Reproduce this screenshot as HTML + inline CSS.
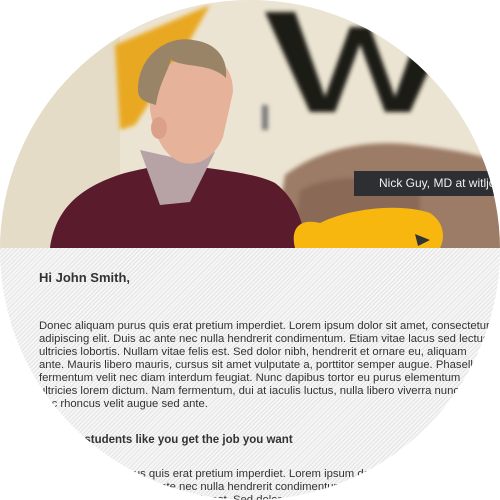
<!DOCTYPE html>
<html><head><style>
html,body{margin:0;padding:0;background:#fff;width:500px;height:500px;overflow:hidden}
.c{position:absolute;left:0;top:0;width:500px;height:500px;border-radius:50%;overflow:hidden;
background:repeating-linear-gradient(135deg,#f6f6f6 0 2px,#e4e4e4 2px 3px)}
.ph{position:absolute;left:0;top:0;width:500px;height:248px}
.cap{position:absolute;left:354px;top:171px;width:160px;height:25px;background:#2d2f33;color:#f0f0f0;font:12px "Liberation Sans",sans-serif;line-height:25px;padding-left:25px;box-sizing:border-box;white-space:nowrap}
.t{position:absolute;left:39px;font-family:"Liberation Sans",sans-serif;color:#333;white-space:nowrap}
.h{font-size:13px;font-weight:bold}
.p{font-size:11.3px;line-height:13px}
</style></head><body>
<div class="c">
<svg class="ph" viewBox="0 0 500 248" width="500" height="248">
<defs><filter id="b"><feGaussianBlur stdDeviation="2"/></filter></defs>
<rect width="500" height="248" fill="#ece4d2"/>
<rect x="0" y="0" width="120" height="248" fill="#e4dcc6"/>
<g filter="url(#b)">
<polygon points="115,45 210,5 190,40 135,125 120,130" fill="#e9a823"/>
<path d="M265 12h30l30 85 25-70h20l25 70 30-85h30l-45 100h-25l-25-68-25 68h-25z" fill="#1e1a16"/>
<path d="M285 175c40-30 90-35 130-30 40 5 70 10 90 20v100H270z" fill="#9c7b66"/>
<path d="M300 190c40-20 80-10 120-5v70H290z" fill="#8a6a56"/>
<rect x="262" y="105" width="6" height="25" fill="#777"/>
</g>
<path d="M50 248c5-35 25-60 75-75 20-5 45-10 60-8 35 5 70 8 90 18 20 15 30 40 30 65z" fill="#5a1c2c"/>
<path d="M140 150l20 55 30-3 25-50-30 8z" fill="#b7a3a6"/>
<path d="M150 110c5 30 15 45 30 52 18 6 35-5 43-25l10-45c0-30-20-40-45-35-25 5-40 25-38 53z" fill="#e6b39a"/>
<ellipse cx="159" cy="128" rx="8" ry="11" fill="#dca08a"/>
<path d="M138 90c0-35 30-55 55-50 25 3 35 20 33 38-15-15-40-10-55-18-5 15-12 25-15 45-10-3-18-5-18-15z" fill="#9a8468"/>
<path d="M295 248c-5-20 5-30 25-25 30-15 80-20 110-10 15 10 15 25 10 35z" fill="#f7b70f"/>
<polygon points="415,234 430,240 418,246" fill="#333"/>
</svg>
<div class="cap">Nick Guy, MD at witljobs</div>
<div class="t h" style="top:270px">Hi John Smith,</div>
<div class="t p" style="top:320px">Donec aliquam purus quis erat pretium imperdiet. Lorem ipsum dolor sit amet, consectetur<br>adipiscing elit. Duis ac ante nec nulla hendrerit condimentum. Etiam vitae lacus sed lectus<br>ultricies lobortis. Nullam vitae felis est. Sed dolor nibh, hendrerit et ornare eu, aliquam<br>ante. Mauris libero mauris, cursus sit amet vulputate a, porttitor semper augue. Phasellus<br>fermentum velit nec diam interdum feugiat. Nunc dapibus tortor eu purus elementum<br>ultricies lorem dictum. Nam fermentum, dui at iaculis luctus, nulla libero viverra nunc,<br>nec rhoncus velit augue sed ante.</div>
<div class="t h" style="top:434px;font-size:11.5px">Helping students like you get the job you want</div>
<div class="t p" style="top:468px">Donec aliquam purus quis erat pretium imperdiet. Lorem ipsum dolor sit amet<br>adipiscing elit. Duis ac ante nec nulla hendrerit condimentum. Etiam<br>ultricies lobortis. Nullam vitae felis est. Sed dolor</div>
</div>
</body></html>
